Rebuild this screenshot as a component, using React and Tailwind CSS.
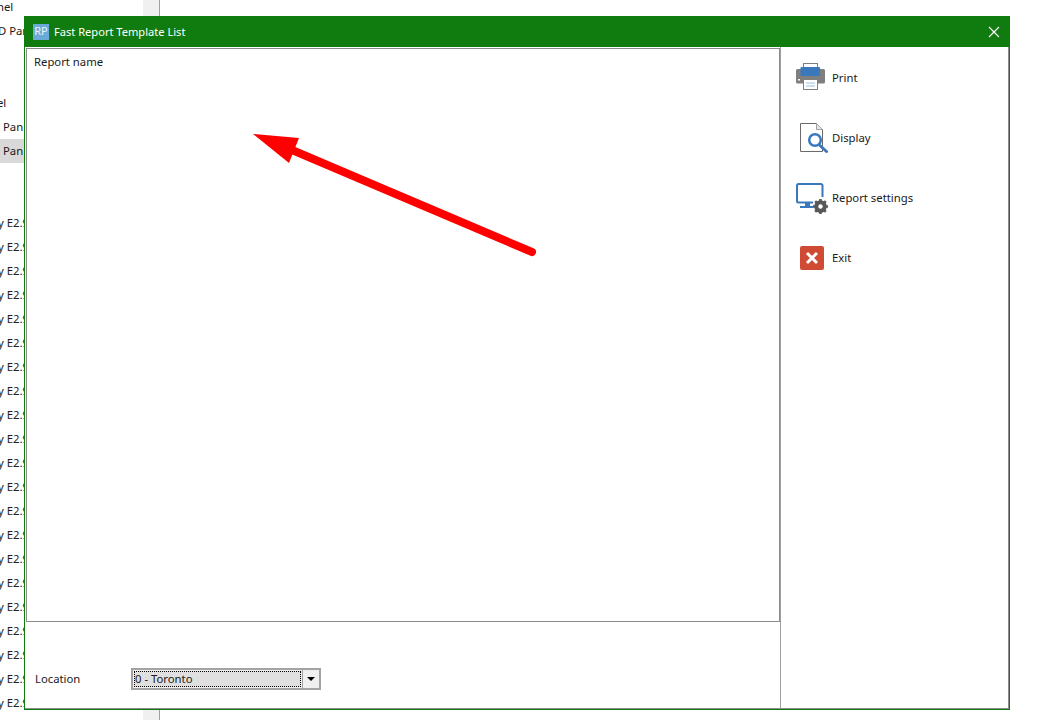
import React from 'react';

// rows of the list behind the dialog, only their left ends show
const listRows = [
  { text: 'nel', className: '-ml-[3px]' },
  { text: 'D Pan', className: '-ml-[2px]' },
  { text: '' },
  { text: '' },
  { text: 'el', className: '-ml-[3px]' },
  { text: 'Pan', className: 'ml-[3px]' },
  { text: 'Pan', className: 'ml-[3px]', selected: true },
  { text: '' },
  { text: '' },
  ...Array.from({ length: 21 }, () => ({ text: 'y E2.9', className: '-ml-[2px]' })),
];

function PrintIcon() {
  return (
    <svg width="32" height="32" viewBox="0 0 32 32" fill="none">
      <rect x="7.500" y="1.500" width="14" height="6" fill="#fff" stroke="#7f7f7f" />
      <path d="M1.500 7H27.500A1.500 1.500 0 0 1 29 8.500V20A1.500 1.500 0 0 1 27.500 21.500H1.500A1.500 1.500 0 0 1 0 20V8.500A1.500 1.500 0 0 1 1.500 7Z" fill="#7f7f7f" />
      <rect x="4.500" y="5" width="19.500" height="9" rx="1" fill="#3b78bb" />
      <rect x="2" y="17" width="2" height="1.500" fill="#fff" />
      <rect x="7.500" y="17.500" width="14" height="10" fill="#fff" stroke="#7f7f7f" />
      <path d="M10 21H19M10 24H19" stroke="#9dc0e4" />
    </svg>
  );
}

function DisplayIcon() {
  return (
    <svg width="32" height="32" viewBox="0 0 32 32" fill="none">
      <path d="M4.500 1.500H20.500L26.500 7.500V29.500H4.500Z" fill="#fff" stroke="#6a6a6a" />
      <path d="M20.500 1.500V7.500H26.500" fill="#e6e6e6" stroke="#a0a0a0" />
      <circle cx="19" cy="18" r="5.800" fill="#fff" stroke="#3b78bb" strokeWidth="2.500" />
      <path d="M24 23.500L30.500 29.500" stroke="#3b78bb" strokeWidth="3" strokeLinecap="round" />
    </svg>
  );
}

function SettingsIcon() {
  return (
    <svg width="32" height="32" viewBox="0 0 32 32" fill="none">
      <path d="M17 20.500H2.500A1.500 1.500 0 0 1 1 19V3.500A1.500 1.500 0 0 1 2.500 2H25A1.500 1.500 0 0 1 26.500 3.500V15" stroke="#3b78bb" strokeWidth="2" />
      <rect x="9" y="21" width="5" height="3" fill="#3b78bb" />
      <rect x="4" y="24" width="13" height="2" fill="#3b78bb" />
      <path d="M24.500 17V32M17 24.500H32M19.200 19.200L29.800 29.800M29.800 19.200L19.200 29.800" stroke="#585858" strokeWidth="2.600" />
      <circle cx="24.500" cy="24.500" r="4.300" stroke="#585858" strokeWidth="4" />
      <circle cx="24.500" cy="24.500" r="2.200" fill="#fff" />
    </svg>
  );
}

function ExitIcon() {
  return (
    <svg width="32" height="32" viewBox="0 0 32 32" fill="none">
      <rect x="4" y="4" width="24" height="24" rx="2" fill="#d04b33" />
      <path d="M11 11L21 21M21 11L11 21" stroke="#fff" strokeWidth="3" />
    </svg>
  );
}

const actions = [
  { label: 'Print', Icon: PrintIcon },
  { label: 'Display', Icon: DisplayIcon },
  { label: 'Report settings', Icon: SettingsIcon },
  { label: 'Exit', Icon: ExitIcon },
];

export default function App() {
  return (
    <div className="relative h-[720px] w-[1054px] overflow-hidden bg-white text-[11.3px] text-[#1a1a1a] font-['Noto_Sans',sans-serif]">
      {/* List behind the dialog */}
      <div className="flex h-full w-[160px] border-r border-[#a0a0a0]">
        <div className="-mt-[5px] w-[143px] shrink-0 overflow-hidden">
          {listRows.map((row, index) => (
            <div
              key={index}
              className={`flex h-[24px] items-center whitespace-nowrap pt-px ${row.selected ? 'bg-[#d9d9d9]' : ''}`}
            >
              <span className={row.className}>{row.text}</span>
            </div>
          ))}
        </div>
        <div className="flex-1 bg-[#f0f0f0]" />
      </div>

      {/* Dialog */}
      <div className="absolute left-[24px] top-[16px] flex h-[694px] w-[986px] flex-col border-x border-b border-[#107c10]">
        <div className="-mx-px flex h-[31px] shrink-0 items-center bg-[#107c10] pl-[9px] pr-[10px] text-white">
          <div className="flex h-[16px] w-[16px] items-center justify-center bg-[#69abd6] text-[11px] text-[#e8f2f9]">RP</div>
          <span className="ml-[5px] flex-1 pt-px text-[11.1px]">Fast Report Template List</span>
          <svg width="12" height="12" viewBox="0 0 12 12" fill="none">
            <path d="M1 1L11 11M11 1L1 11" stroke="#fff" strokeWidth="1.200" />
          </svg>
        </div>
        <div className="flex min-h-0 flex-1 border-r border-b border-[#8c8c8c] bg-white">
          <div className="flex w-[755px] shrink-0 flex-col pl-px pt-px">
            <div className="h-[574px] shrink-0 border border-[#8a8a8a] pl-[7px] pt-[5px]">Report name</div>
            <div className="flex flex-1 items-center pb-[8px] pl-[9px] pt-[36px]">
              <span className="w-[96px]">Location</span>
              <div className="flex h-[22px] w-[190px] items-center border-2 border-[#a3a3a3] bg-[#f0f0f0]">
                <div className="mx-px flex h-[16px] flex-1 items-center border border-dotted border-black bg-[#e0e0e0] pt-px">0 - Toronto</div>
                <div className="flex h-full w-[17px] items-center justify-center border-l border-[#a3a3a3]">
                  <svg width="8" height="4" viewBox="0 0 8 4"><path d="M0 0H8L4 4Z" fill="#000" /></svg>
                </div>
              </div>
            </div>
          </div>
          <div className="flex-1 border-l border-[#a0a0a0] pl-[15px] pt-px">
            {actions.map(({ label, Icon }) => (
              <div key={label} className="flex h-[60px] items-center gap-[4px]">
                <Icon />
                <span className="pt-px">{label}</span>
              </div>
            ))}
          </div>
        </div>
      </div>

      {/* Annotation arrow on top of the screenshot */}
      <svg className="absolute inset-0" width="1054" height="720" fill="none">
        <path d="M292 150L532 252" stroke="#ff0000" strokeWidth="8" strokeLinecap="round" />
        <path d="M253 134L299 138L289 163Z" fill="#ff0000" />
      </svg>
    </div>
  );
}
